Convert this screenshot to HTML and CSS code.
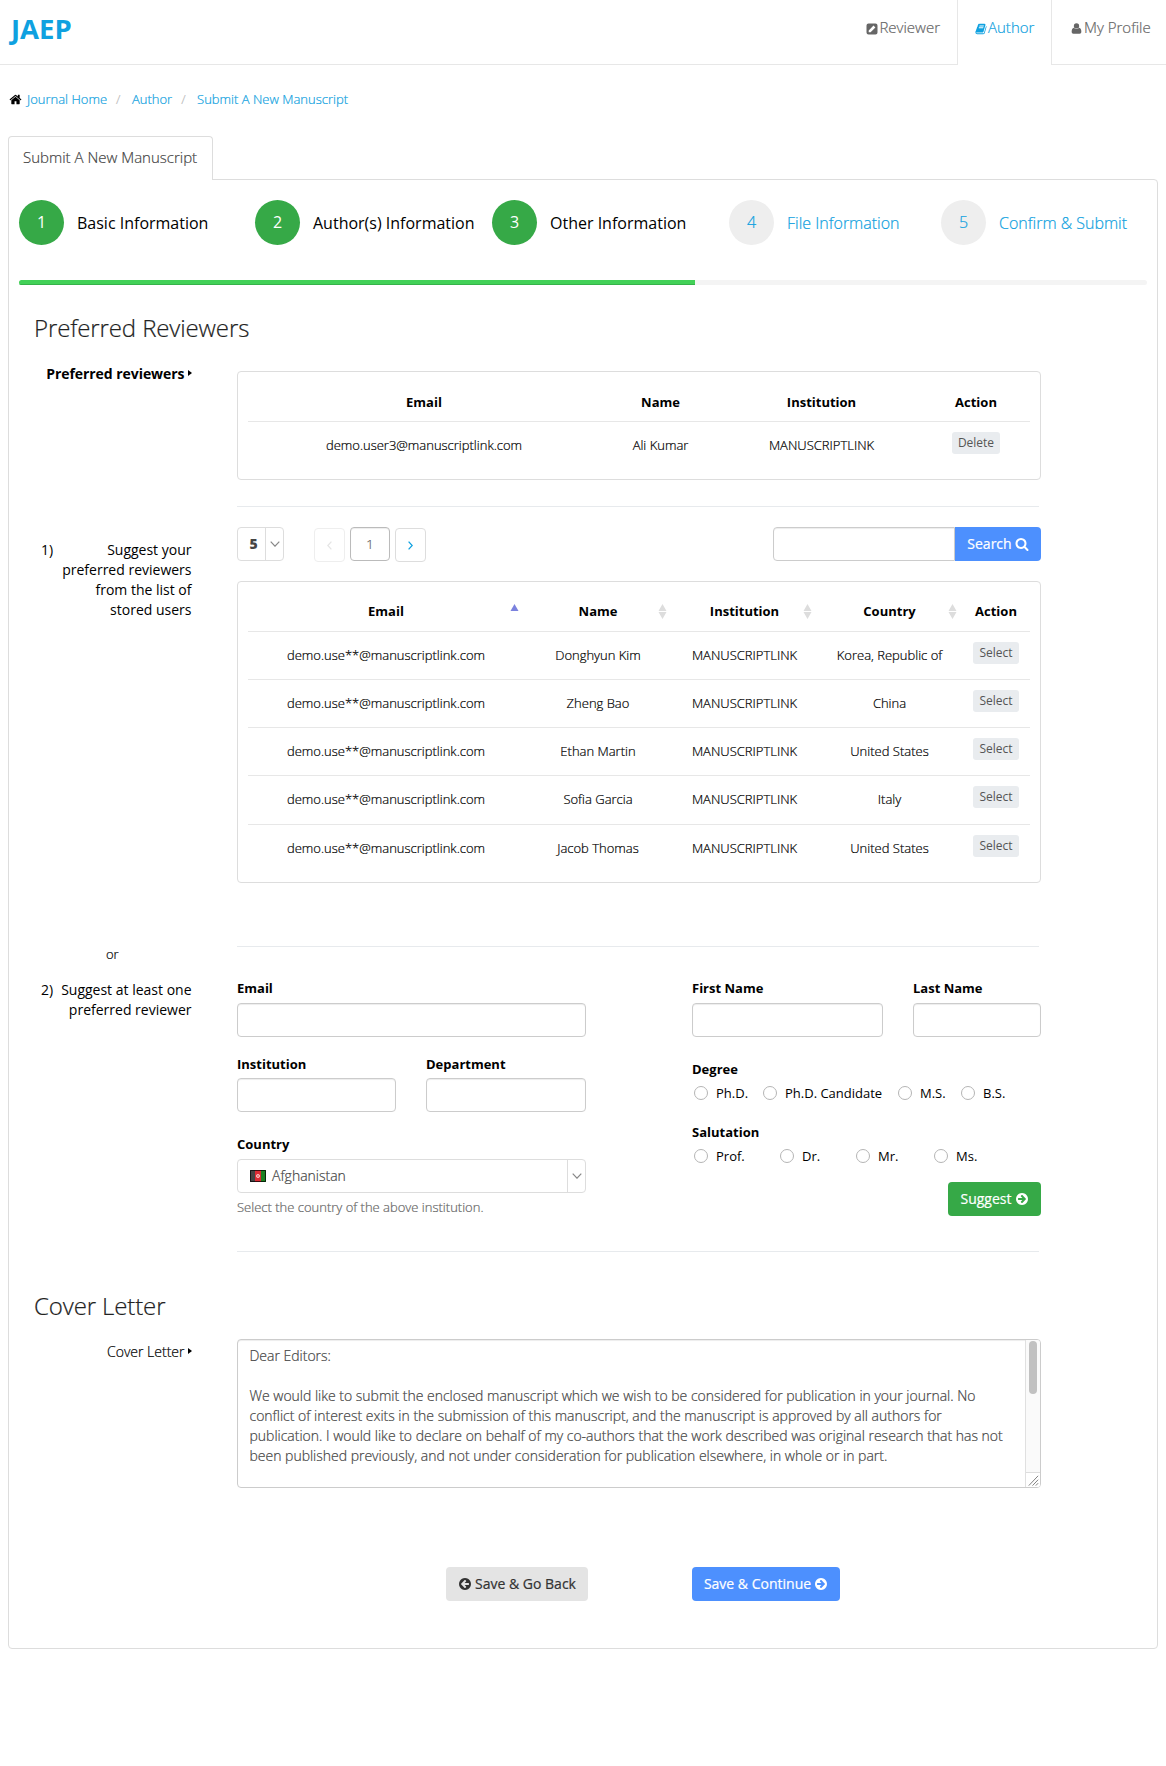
FILE: index.html
```html
<!DOCTYPE html>
<html lang="en">
<head>
<meta charset="utf-8">
<title>Submit A New Manuscript</title>
<link rel="stylesheet" href="styles.css">
</head>
<body>
<svg class="defs" width="0" height="0">
  <symbol id="arrow" viewBox="0 0 1792 1792"><path d="M1413 896q0-27-18-45l-91-91-362-362q-18-18-45-18t-45 18l-91 91q-18 18-18 45t18 45l189 189h-502q-26 0-45 19t-19 45v128q0 26 19 45t45 19h502l-189 189q-19 19-19 45t19 45l91 91q18 18 45 18t45-18l362-362 91-91q18-18 18-45zm251 0q0 209-103 385.500t-279.500 279.500-385.500 103-385.500-103-279.500-279.500-103-385.500 103-385.500 279.500-279.500 385.500-103 385.500 103 279.500 279.500 103 385.500z" fill-rule="evenodd"/></symbol>
  <symbol id="sort" viewBox="0 0 8 15"><path d="M4 0l4 7H0zM0 8h8l-4 7z"/></symbol>
  <symbol id="down" viewBox="0 0 10 6"><path d="M.7.7L5 5.200 9.300.7" fill="none" stroke="#888" stroke-width="1.200"/></symbol>
</svg>

<header class="topbar">
  <a class="brand">JAEP</a>
  <nav class="nav">
    <a class="nav-item"><svg class="nav-icon" viewBox="0 0 12 12"><path fill-rule="evenodd" d="M2.500.5h7a2 2 0 0 1 2 2v7a2 2 0 0 1-2 2h-7a2 2 0 0 1-2-2v-7a2 2 0 0 1 2-2zM2.700 7.400v1.900h1.900L9.400 4.500 7.500 2.600z"/></svg>Reviewer</a>
    <a class="nav-item active"><svg class="nav-icon" viewBox="0 0 1792 1792"><path d="M1703 478q40 57 18 129l-275 906q-19 64-76.500 107.500t-122.500 43.500h-923q-77 0-148.500-53.500t-99.500-131.500q-24-67-2-127 0-4 3-27t4-37q1-8-3-21.500t-3-19.500q2-11 8-21t16.500-23.500 16.500-23.500q23-38 45-91.500t30-91.500q3-10 .5-30t-.5-28q3-11 17-28t17-23q21-36 42-92t25-90q1-9-2.500-32t.5-28q4-13 22-30.500t22-22.500q19-26 42.500-84.500t27.500-96.500q1-8-3-25.500t-2-26.500q2-8 9-18t18-23 17-21q8-12 16.500-30.500t15-35 16-36 19.500-32 26.500-23.500 36-11.500 47.500 5.500l-1 3q38-9 51-9h761q74 0 114 56t18 130l-274 906q-36 119-71.500 153.500t-128.500 34.500h-869q-27 0-38 15-11 16-1 43 24 70 144 70h923q29 0 56-15.500t35-41.500l300-987q7-22 5-57 38 15 59 43zm-1064 2q-4 13 2 22.500t20 9.500h608q13 0 25.500-9.500t16.500-22.500l21-64q4-13-2-22.500t-20-9.500h-608q-13 0-25.500 9.500t-16.500 22.500zm-83 256q-4 13 2 22.500t20 9.500h608q13 0 25.500-9.500t16.500-22.500l21-64q4-13-2-22.500t-20-9.500h-608q-13 0-25.500 9.500t-16.500 22.500z"/></svg>Author</a>
    <a class="nav-item profile"><svg class="nav-icon" viewBox="0 0 12 12"><circle cx="6" cy="3.200" r="2.900"/><path d="M3.100 5.300Q6 8 8.900 5.300 11.300 5.800 11.300 9.800q0 1.900-1.900 1.900H2.600Q.7 11.700.7 9.800.7 5.800 3.100 5.300z"/></svg>My Profile</a>
  </nav>
</header>

<div class="crumbs">
  <svg class="home" viewBox="0 0 1792 1792"><path d="M1472 992v480q0 26-19 45t-45 19h-384v-384h-256v384h-384q-26 0-45-19t-19-45v-480q0-1 .5-3t.5-3l575-474 575 474q1 2 1 6zm223-69l-62 74q-8 9-21 11h-3q-13 0-21-7l-692-577-692 577q-12 8-24 7-13-2-21-11l-62-74q-8-10-7-23.500t11-21.500l719-599q32-26 76-26t76 26l244 204v-195q0-14 9-23t23-9h192q14 0 23 9t9 23v408l219 182q10 8 11 21.500t-7 23.500z"/></svg>
  <a>Journal Home</a><span class="sep">/</span><a>Author</a><span class="sep">/</span><a>Submit A New Manuscript</a>
</div>

<div class="tabs"><span class="tab">Submit A New Manuscript</span></div>
<main class="panel">
  <ol class="steps">
    <li class="done"><span class="num">1</span>Basic Information</li>
    <li class="done"><span class="num">2</span>Author(s) Information</li>
    <li class="done"><span class="num">3</span>Other Information</li>
    <li><span class="num">4</span>File Information</li>
    <li><span class="num">5</span>Confirm &amp; Submit</li>
  </ol>
  <div class="progress"><div class="bar"></div></div>

  <h2>Preferred Reviewers</h2>
  <section class="row">
    <div class="label strong">Preferred reviewers<i class="caret"></i></div>
    <div class="content first">
      <div class="card">
        <div class="tr chosen head"><b>Email</b><b>Name</b><b>Institution</b><b>Action</b></div>
        <div class="tr chosen"><span>demo.user3@manuscriptlink.com</span><span>Ali Kumar</span><span>MANUSCRIPTLINK</span><span class="act"><button class="mini">Delete</button></span></div>
      </div>
      <hr>
    </div>
  </section>

  <section class="row stored">
    <div class="label numbered"><span>1)</span><span>Suggest your<br>preferred reviewers<br>from the list of<br>stored users</span></div>
    <div class="content">
      <div class="controls">
        <div class="size"><b>5</b><span class="drop"><svg width="10" height="6"><use href="#down"/></svg></span></div>
        <div class="page prev"><svg width="5" height="9" viewBox="0 0 5 9"><path d="M4.400.6L.8 4.500l3.600 3.900"/></svg></div>
        <div class="page current">1</div>
        <div class="page next"><svg width="5" height="9" viewBox="0 0 5 9"><path d="M.6.6l3.600 3.900L.6 8.400"/></svg></div>
        <input class="query" type="text"><button class="btn search">Search <svg class="ic" viewBox="0 0 1792 1792"><path d="M1216 832q0-185-131.500-316.500t-316.500-131.500-316.500 131.500-131.500 316.500 131.500 316.500 316.500 131.500 316.500-131.500 131.500-316.500zm512 832q0 52-38 90t-90 38q-54 0-90-38l-343-342q-179 124-399 124-143 0-273.500-55.500t-225-150-150-225-55.500-273.500 55.500-273.500 150-225 225-150 273.500-55.500 273.500 55.500 225 150 150 225 55.500 273.500q0 220-124 399l343 343q37 37 37 90z"/></svg></button>
      </div>
      <div class="card users">
        <div class="tr head"><b>Email<svg class="sort up" viewBox="0 0 8 15"><path d="M4 0l4 7H0z"/></svg></b><b>Name<svg class="sort"><use href="#sort"/></svg></b><b>Institution<svg class="sort"><use href="#sort"/></svg></b><b>Country<svg class="sort"><use href="#sort"/></svg></b><b>Action</b></div>
        <div class="tr"><span>demo.use**@manuscriptlink.com</span><span>Donghyun Kim</span><span>MANUSCRIPTLINK</span><span>Korea, Republic of</span><span class="act"><button class="mini">Select</button></span></div>
        <div class="tr"><span>demo.use**@manuscriptlink.com</span><span>Zheng Bao</span><span>MANUSCRIPTLINK</span><span>China</span><span class="act"><button class="mini">Select</button></span></div>
        <div class="tr"><span>demo.use**@manuscriptlink.com</span><span>Ethan Martin</span><span>MANUSCRIPTLINK</span><span>United States</span><span class="act"><button class="mini">Select</button></span></div>
        <div class="tr"><span>demo.use**@manuscriptlink.com</span><span>Sofia Garcia</span><span>MANUSCRIPTLINK</span><span>Italy</span><span class="act"><button class="mini">Select</button></span></div>
        <div class="tr"><span>demo.use**@manuscriptlink.com</span><span>Jacob Thomas</span><span>MANUSCRIPTLINK</span><span>United States</span><span class="act"><button class="mini">Select</button></span></div>
      </div>
    </div>
  </section>

  <section class="row manual">
    <div>
      <div class="or">or</div>
      <div class="label numbered"><span>2)</span><span>Suggest at least one<br>preferred reviewer</span></div>
    </div>
    <div class="content">
      <hr>
      <div class="form">
        <div class="left">
          <label>Email<input type="text"></label>
          <div class="pair halves">
            <label>Institution<input type="text"></label>
            <label>Department<input type="text"></label>
          </div>
          <div class="field-name">Country</div>
          <div class="country">
            <svg class="flag" width="16" height="12" viewBox="0 0 16 12"><path fill="#444" d="M0 0h5v12H0z"/><path fill="#dc2a34" d="M5 0h6v12H5z"/><path fill="#1c8022" d="M11 0h5v12h-5z"/><path fill="none" stroke="#000" stroke-opacity=".7" d="M.5.5h15v11H.5z"/><circle cx="8" cy="6" r="1.600" fill="#e77" stroke="#fbd5d5" stroke-width=".8"/></svg>
            Afghanistan
            <span class="drop"><svg width="10" height="6"><use href="#down"/></svg></span>
          </div>
          <p class="help">Select the country of the above institution.</p>
        </div>
        <div class="right">
          <div class="pair names">
            <label>First Name<input type="text"></label>
            <label>Last Name<input type="text"></label>
          </div>
          <div class="field-name degree">Degree</div>
          <div class="radios deg"><span><i></i>Ph.D.</span><span><i></i>Ph.D. Candidate</span><span><i></i>M.S.</span><span><i></i>B.S.</span></div>
          <div class="field-name salutation">Salutation</div>
          <div class="radios sal"><span><i></i>Prof.</span><span><i></i>Dr.</span><span><i></i>Mr.</span><span><i></i>Ms.</span></div>
          <button class="btn suggest">Suggest <svg class="ic"><use href="#arrow"/></svg></button>
        </div>
      </div>
      <hr class="end">
    </div>
  </section>

  <h2 class="cover-title">Cover Letter</h2>
  <section class="row cover">
    <div class="label light">Cover Letter<i class="caret"></i></div>
    <div class="content">
      <div class="letter">
        <div class="letter-text"><p>Dear Editors:</p>
          <p>We would like to submit the enclosed manuscript which we wish to be considered for publication in your journal. No<br>conflict of interest exits in the submission of this manuscript, and the manuscript is approved by all authors for<br>publication. I would like to declare on behalf of my co-authors that the work described was original research that has not<br>been published previously, and not under consideration for publication elsewhere, in whole or in part.</p></div>
        <div class="scroll"><div class="thumb"></div><svg class="grip" viewBox="0 0 14 15"><path d="M2.500 13.500l10-10.500M6.500 13.500l6-6.300M10 13.500l2.500-2.600" fill="none" stroke="#777"/></svg></div>
      </div>
    </div>
  </section>
  <div class="actions">
    <button class="btn back"><svg class="ic flip"><use href="#arrow"/></svg> Save &amp; Go Back</button>
    <button class="btn go">Save &amp; Continue <svg class="ic"><use href="#arrow"/></svg></button>
  </div>
</main>
</body>
</html>
```
FILE: styles.css
```css
* { box-sizing: border-box; }
body { margin: 0; height: 1766px; background: #fff; color: #000; font: 300 13px/20px "Open Sans", sans-serif; -webkit-text-stroke: .2px; }
svg { display: block; flex: none; fill: currentColor; }
.defs { position: absolute; }
button, input { font: inherit; margin: 0; }
b, label, .field-name, .brand, .label, .done, .radios { -webkit-text-stroke: 0; }

.topbar { display: flex; justify-content: space-between; height: 65px; }
.brand { flex: 1; padding: 19px 0 0 11px; border-bottom: 1px solid #e7e7e7; color: #0fa1e0; font-size: 27.500px; font-weight: 700; }
.nav { display: flex; color: #666; font-size: 15px; }
.nav-item { display: flex; align-items: flex-start; padding: 17px 17px 0; border-bottom: 1px solid #e7e7e7; white-space: nowrap; }
.nav-item.active { width: 95px; padding-left: 17px; border: solid #e7e7e7; border-width: 0 1px; color: #0fa1e0; }
.nav-item.profile { width: 114px; padding: 17px 0 0 19px; }
.nav-icon { width: 12px; height: 12px; margin: 6px 1px 0 0; }
.profile .nav-icon { width: 11px; height: 11px; margin: 6px 2px 0 0; }

.crumbs { display: flex; height: 20px; margin: 24px 0 0 9px; color: #0fa1e0; }
.home { width: 13px; height: 13px; margin: 4px 5px 0 0; color: #000; }
.sep { margin: 0 11.500px 0 9px; color: #bbb; }

.tabs { display: flex; margin: 27px 8px 0; }
.tab { position: relative; z-index: 1; width: 205px; height: 44px; margin-bottom: -1px; padding: 10px 0 0 14px; background: #fff; border: 1px solid #ddd; border-bottom: 0; border-radius: 4px 4px 0 0; color: #444; font-size: 15px; white-space: nowrap; }
.panel { height: 1470px; margin: 0 8px; padding: 20px 10px 0; border: 1px solid #ddd; border-radius: 0 4px 4px 4px; }

.steps { display: grid; grid-template-columns: 236px 237px 237px 212px 1fr; margin: 0; padding: 0; list-style: none; font-size: 16px; }
.steps li { display: flex; align-items: center; gap: 13px; color: #0fa1e0; white-space: nowrap; }
.num { width: 45px; height: 45px; border-radius: 50%; background: #eee; text-align: center; line-height: 45px; }
.steps .done { color: #000; font-weight: 400; }
.done .num { background: #36a947; color: #fff; }
.progress { height: 5px; margin-top: 35px; border-radius: 3px; background: #f4f4f4; overflow: hidden; }
.bar { width: 676px; height: 5px; background: #42d157; border-bottom: 1px solid #36b24a; }

h2 { margin: 28px 0 20px 15px; color: #222; font-size: 24px; font-weight: 300; line-height: 30px; letter-spacing: -.12px; }
.row { display: grid; grid-template-columns: 172.500px 804px; column-gap: 45.500px; }
.label { font-size: 14px; font-weight: 400; text-align: right; }
.label.strong { padding-top: 1px; font-weight: 700; letter-spacing: -.05px; }
.label.light { font-weight: 300; padding-top: 3px; -webkit-text-stroke: .2px; }
.caret { display: inline-block; margin-left: 3px; border: solid transparent; border-width: 3px 0 3px 4px; border-left-color: #000; vertical-align: 3px; }
.numbered { display: flex; justify-content: space-between; padding-left: 22px; }
.first { padding-top: 8px; }
.card { border: 1px solid #ddd; border-radius: 4px; padding: 0 10px; height: 109px; }
hr { width: 802px; height: 1px; margin: 0; border: 0; background: #e7eaed; }
.first hr { margin-top: 26px; }

.tr { display: grid; grid-template-columns: 276px 148px 145px 145px 1fr; height: 48px; padding-top: 13px; border-top: 1px solid #e7e7e7; text-align: center; }
.tr.chosen { grid-template-columns: 352px 121px 201px 1fr; }
.tr.head { height: 49px; padding-top: 19px; border-top: 0; }
.tr.chosen.head { padding-top: 20px; }
.tr b { position: relative; font-weight: 700; }
.mini { display: block; height: 22px; margin: -3px auto 0; padding: 0 6px; border: 0; border-radius: 3px; background: #e9ecef; color: #555; font-size: 12px; font-weight: 400; line-height: 20px; -webkit-text-stroke: 0; }
.sort { position: absolute; right: 5px; top: 3px; width: 9px; height: 15px; color: #ddd; }
.sort.up { color: #7b82de; }

.stored { margin-top: 20px; }
.stored .label { padding-top: 13px; }
.controls { display: flex; height: 34px; margin-bottom: 20px; }
.size { display: flex; width: 47px; margin-right: 30px; border: 1px solid #ddd; border-radius: 4px; color: #444; font-size: 14px; font-weight: 700; line-height: 32px; }
.size b { flex: 1; text-align: center; padding-left: 4px; }
.drop { display: flex; align-items: center; justify-content: center; width: 18px; border-left: 1px solid #ddd; }
.page { display: flex; align-items: center; justify-content: center; width: 31px; height: 34px; margin: 1px 5px 0 0; border: 1px solid #ddd; border-radius: 4px; color: #0fa1e0; }
.page path { fill: none; stroke: currentColor; stroke-width: 1.300; }
.prev { border-color: #eee; color: #e5e5e5; }
.current { width: 40px; margin-top: 0; border-color: #bbb; color: #666; font-size: 13px; box-shadow: inset 0 1px 1px rgba(0,0,0,.075); }
input { display: block; width: 100%; height: 34px; padding: 6px 12px; border: 1px solid #ccc; border-radius: 4px; background: #fff; box-shadow: inset 0 1px 1px rgba(0,0,0,.075); }
.query { width: 182px; margin-left: auto; border-radius: 4px 0 0 4px; }
.btn { display: flex; align-items: center; justify-content: center; gap: 3px; height: 34px; padding: 0; border: 0; border-radius: 4px; color: #fff; font-size: 14px; font-weight: 400; white-space: nowrap; }
.search { width: 86px; border-radius: 0 4px 4px 0; background: #4d90fe; }
.ic { width: 14px; height: 14px; }
.flip { transform: scaleX(-1); }
.users { height: 302px; }
.users .tr:nth-child(5) { height: 49px; }

.manual { margin-top: 61px; }
.or { padding-left: 87px; margin-bottom: 16px; }
.manual hr { margin-top: 2px; }
.manual hr.end { margin-top: 0; }
.form { display: grid; grid-template-columns: 349px 349px; justify-content: space-between; padding-top: 31px; height: 304px; }
label, .field-name { display: block; font-weight: 700; }
label input { margin-top: 5px; }
.pair { display: grid; justify-content: space-between; }
.halves { grid-template-columns: 159px 160px; margin: 17px 0 22px; }
.halves input { margin-top: 4px; }
.names { grid-template-columns: 191px 128px; }
.country { display: flex; align-items: center; gap: 6px; height: 34px; margin-top: 5px; padding-left: 12px; border: 1px solid #ddd; border-radius: 4px; color: #444; font-size: 14px; }
.country .drop { height: 32px; margin-left: auto; }
.help { margin: 4px 0 0; color: #666; }
.right { display: flex; flex-direction: column; }
.degree { margin-top: 22px; }
.salutation { margin-top: 19px; }
.radios { display: grid; margin: 4px 0 0 2px; font-weight: 400; }
.radios span { display: flex; gap: 8px; white-space: nowrap; }
.radios i { width: 14px; height: 14px; margin-top: 3px; border: 1px solid #b5b5b5; border-radius: 50%; background: #fff; }
.deg { grid-template-columns: 69px 135px 63px 1fr; }
.sal { grid-template-columns: 86px 76px 78px 1fr; }
.suggest { width: 93px; margin: 16px 0 0 auto; background: #36a947; }

h2.cover-title { margin: 39px 0 18px 15px; }
.letter { display: flex; height: 149px; border: 1px solid #ccc; border-radius: 4px; overflow: hidden; box-shadow: inset 0 1px 1px rgba(0,0,0,.075); color: #444; font-size: 14px; letter-spacing: -.01px; }
.letter-text { flex: 1; padding: 6px 0 0 11.500px; white-space: nowrap; }
.letter-text p { margin: 0 0 20px; }
.scroll { display: flex; flex-direction: column; justify-content: space-between; width: 15px; border-left: 1px solid #e0e0e0; background: #fafafa; }
.thumb { width: 8px; height: 53px; margin: 1px 0 0 3px; border-radius: 4px; background: #c1c1c1; }
.grip { width: 14px; height: 15px; background: #fff; border-top: 1px solid #ddd; }
.actions { display: flex; gap: 104px; margin: 79px 0 0 427px; }
.back { width: 142px; background: #e4e4e4; color: #333; }
.go { width: 148px; background: #4d90fe; }
```
